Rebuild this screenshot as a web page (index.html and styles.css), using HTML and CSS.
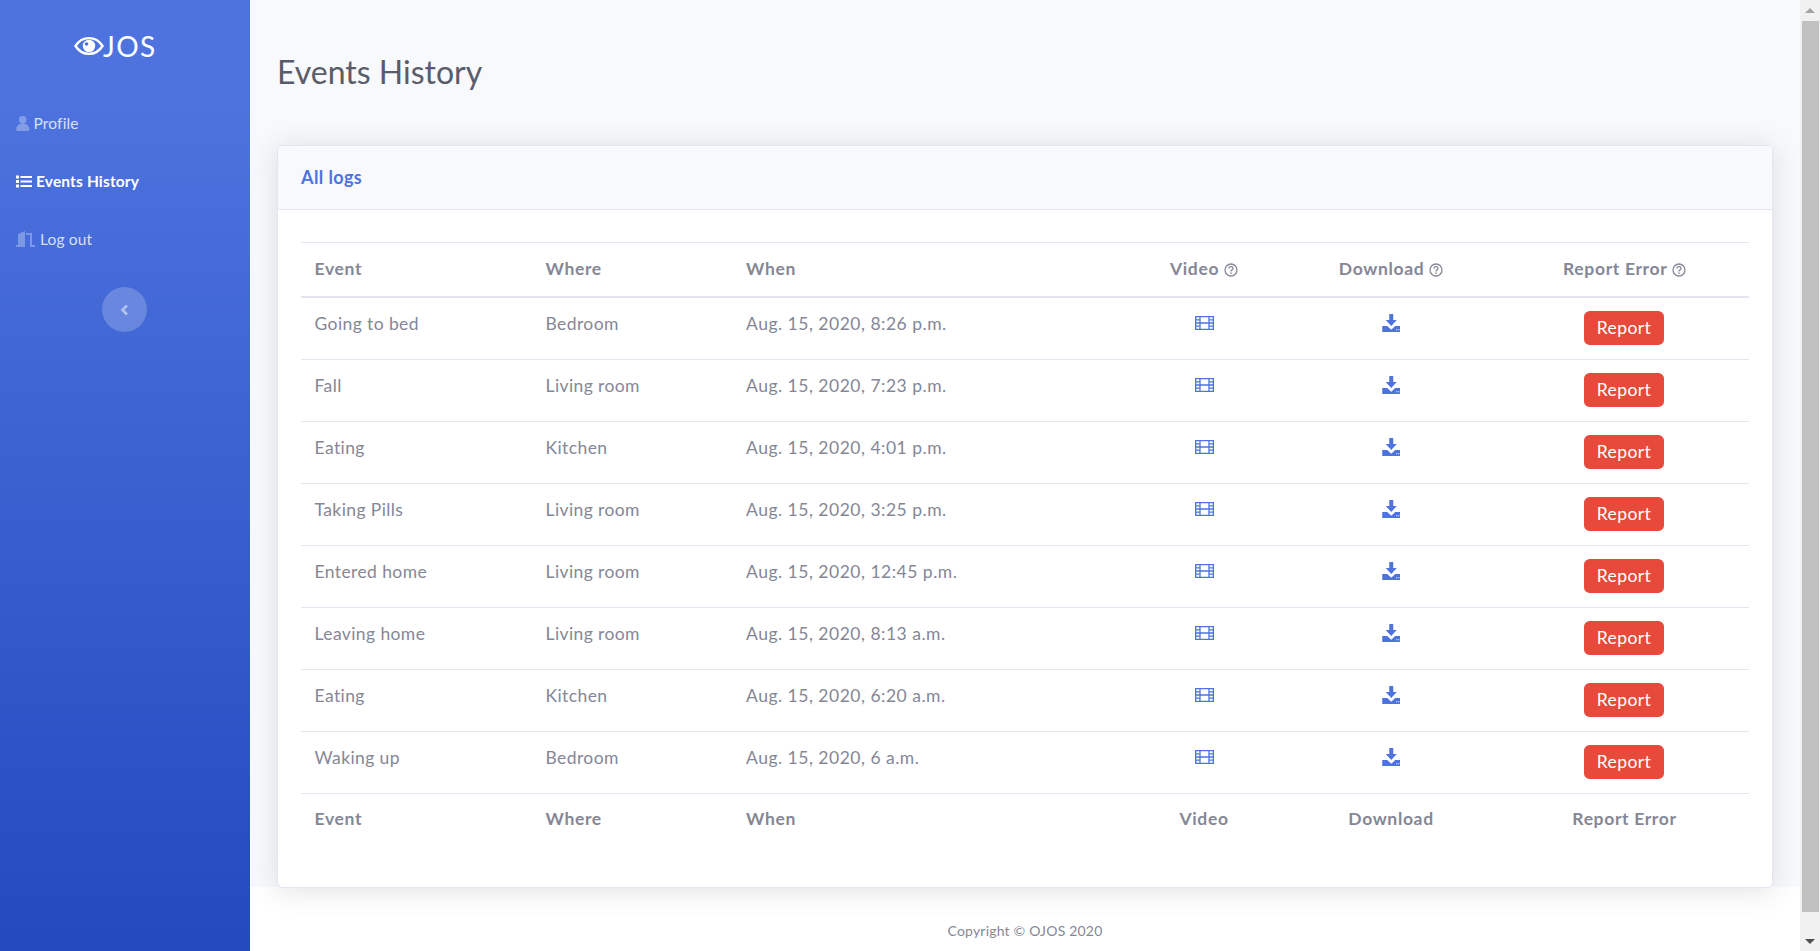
FILE: index.html
```html
<!DOCTYPE html>
<html lang="en">
<head>
<meta charset="utf-8">
<title>OJOS - Events History</title>
<link rel="stylesheet" href="styles.css">
</head>
<body>
<svg class="defs" width="0" height="0">
  <symbol id="film" viewBox="0 0 19 14"><path fill="none" stroke="currentColor" stroke-width="1.300" d="M.65.65h17.700v12.700H.65zM5 .65v12.700M14 .65v12.700M5 7h9M.65 3.800H5M.65 7H5M.65 10.200H5M14 3.800h4.350M14 7h4.350M14 10.200h4.350"/></symbol>
  <symbol id="dl" viewBox="0 0 18 18"><path fill="currentColor" d="M7 0h4v6h3.500L9 12 3.500 6H7zM0 12h5l4 3.800L13 12h5v6H0z"/><path fill="#fff" d="M14 15.200h1v1h-1zM16 15.200h1v1h-1z"/></symbol>
  <symbol id="q" viewBox="0 0 14 14"><circle cx="7" cy="7" r="6" fill="none" stroke="currentColor" stroke-width="1.300"/><path fill="none" stroke="currentColor" stroke-width="1.300" d="M5 5.500C5 3 9 3 9 5.400 9 7 7 6.800 7 8.500"/><path fill="currentColor" d="M6.300 9.500h1.400v1.400H6.300z"/></symbol>
</svg>
<div class="app">
  <aside class="sidebar">
    <div class="brand">
      <svg class="brand-eye" viewBox="0 0 30 20"><path fill="none" stroke="#fff" stroke-width="2.400" d="M1.500 10C8 -0.500 22 -0.500 28.500 10 22 20.500 8 20.500 1.500 10z"/><circle cx="15" cy="10" r="6.200" fill="#fff"/><circle cx="12.500" cy="8" r="1.800" fill="#4e73df"/></svg><span class="brand-text">JOS</span>
    </div>
    <a class="nav-item"><svg class="nav-icon user" viewBox="0 0 14 16"><circle cx="7" cy="4" r="4" fill="currentColor"/><path fill="currentColor" d="M0 14c0-8 14-8 14 0 0 1-.8 2-2 2H2c-1.200 0-2-1-2-2z"/></svg>Profile</a>
    <a class="nav-item active"><svg class="nav-icon list" viewBox="0 0 16 13"><path fill="#fff" d="M0 .5h3v3H0zM0 5h3v3H0zM0 9.500h3v3H0zM4.500 1h11.500v2H4.500zM4.500 5.500h11.500v2H4.500zM4.500 10h11.500v2H4.500z"/></svg>Events History</a>
    <a class="nav-item"><svg class="nav-icon door" viewBox="0 0 20 16"><path fill="currentColor" d="M0 14h2V3l7-3v16H0zM10 2h6v12h3v2h-5V4h-4z"/></svg>Log out</a>
    <button class="toggle"><svg viewBox="0 0 8 12" class="chev"><path fill="none" stroke="currentColor" stroke-width="2.600" d="M6.500 1.500 2 6l4.500 4.500"/></svg></button>
  </aside>
  <div class="main">
    <div class="content">
      <h1 class="title">Events History</h1>
      <section class="card">
        <header class="card-head">All logs</header>
        <div class="card-body">
          <table class="logs">
            <colgroup><col class="c1"><col class="c2"><col class="c3"><col class="c4"><col class="c5"><col class="c6"></colgroup>
            <thead>
              <tr><th>Event</th><th>Where</th><th>When</th><th class="ctr">Video <svg class="q"><use href="#q"/></svg></th><th class="ctr">Download <svg class="q"><use href="#q"/></svg></th><th class="ctr">Report Error <svg class="q"><use href="#q"/></svg></th></tr>
            </thead>
            <tbody>
              <tr><td>Going to bed</td><td>Bedroom</td><td class="when">Aug. 15, 2020, 8:26 p.m.</td><td class="ctr"><svg class="film"><use href="#film"/></svg></td><td class="ctr"><svg class="dl"><use href="#dl"/></svg></td><td class="ctr act"><button class="report">Report</button></td></tr>
              <tr><td>Fall</td><td>Living room</td><td class="when">Aug. 15, 2020, 7:23 p.m.</td><td class="ctr"><svg class="film"><use href="#film"/></svg></td><td class="ctr"><svg class="dl"><use href="#dl"/></svg></td><td class="ctr act"><button class="report">Report</button></td></tr>
              <tr><td>Eating</td><td>Kitchen</td><td class="when">Aug. 15, 2020, 4:01 p.m.</td><td class="ctr"><svg class="film"><use href="#film"/></svg></td><td class="ctr"><svg class="dl"><use href="#dl"/></svg></td><td class="ctr act"><button class="report">Report</button></td></tr>
              <tr><td>Taking Pills</td><td>Living room</td><td class="when">Aug. 15, 2020, 3:25 p.m.</td><td class="ctr"><svg class="film"><use href="#film"/></svg></td><td class="ctr"><svg class="dl"><use href="#dl"/></svg></td><td class="ctr act"><button class="report">Report</button></td></tr>
              <tr><td>Entered home</td><td>Living room</td><td class="when">Aug. 15, 2020, 12:45 p.m.</td><td class="ctr"><svg class="film"><use href="#film"/></svg></td><td class="ctr"><svg class="dl"><use href="#dl"/></svg></td><td class="ctr act"><button class="report">Report</button></td></tr>
              <tr><td>Leaving home</td><td>Living room</td><td class="when">Aug. 15, 2020, 8:13 a.m.</td><td class="ctr"><svg class="film"><use href="#film"/></svg></td><td class="ctr"><svg class="dl"><use href="#dl"/></svg></td><td class="ctr act"><button class="report">Report</button></td></tr>
              <tr><td>Eating</td><td>Kitchen</td><td class="when">Aug. 15, 2020, 6:20 a.m.</td><td class="ctr"><svg class="film"><use href="#film"/></svg></td><td class="ctr"><svg class="dl"><use href="#dl"/></svg></td><td class="ctr act"><button class="report">Report</button></td></tr>
              <tr><td>Waking up</td><td>Bedroom</td><td class="when">Aug. 15, 2020, 6 a.m.</td><td class="ctr"><svg class="film"><use href="#film"/></svg></td><td class="ctr"><svg class="dl"><use href="#dl"/></svg></td><td class="ctr act"><button class="report">Report</button></td></tr>
            </tbody>
            <tfoot>
              <tr><th>Event</th><th>Where</th><th>When</th><th class="ctr">Video</th><th class="ctr">Download</th><th class="ctr">Report Error</th></tr>
            </tfoot>
          </table>
        </div>
      </section>
    </div>
    <footer class="footer">Copyright © OJOS 2020</footer>
  </div>
  <div class="scrollbar">
    <div class="sb-btn"><span class="arrow up"></span></div>
    <div class="sb-track"><div class="sb-thumb"></div></div>
    <div class="sb-btn"><span class="arrow down"></span></div>
  </div>
</div>
</body>
</html>
```
FILE: styles.css
```css
* { box-sizing: border-box; }
html, body { margin: 0; height: 100%; overflow: hidden; }
body { font-family: Lato, "Open Sans", sans-serif; font-size: 17.500px; color: #858796; letter-spacing: .4px; }
.defs { position: absolute; }
.app { display: flex; height: 951px; }

.sidebar { width: 250px; flex: none; background: linear-gradient(180deg, #4e73df 10%, #224abe 100%); display: flex; flex-direction: column; }
.brand { height: 94px; padding: 0 0 2px 74px; display: flex; align-items: center; justify-content: flex-start; color: #fff; }
.brand-eye { width: 30px; height: 20px; flex: none; }
.brand-text { font-size: 28px; font-weight: 400; letter-spacing: 1.400px; line-height: 1; margin-left: -1px; }
.nav-item { height: 58px; display: flex; align-items: center; padding-left: 16px; font-size: 15.500px; color: rgba(255,255,255,.8); letter-spacing: .15px; }
.nav-item.active { color: #fff; font-weight: 700; }
.nav-icon { color: rgba(255,255,255,.3); margin-right: 4px; flex: none; }
.nav-icon.user { width: 13.500px; height: 15px; }
.nav-icon.list { width: 16px; height: 13px; margin-right: 4px; }
.nav-icon.door { width: 20px; height: 16px; margin-right: 4px; }
.toggle { width: 45px; height: 45px; border: 0; border-radius: 50%; background: rgba(255,255,255,.2); color: rgba(255,255,255,.5); align-self: center; margin: 19px 2px 0 0; padding: 0; display: flex; align-items: center; justify-content: center; }
.chev { width: 9px; height: 12px; }

.main { flex: 1; min-width: 0; display: flex; flex-direction: column; background: #fff; }
.content { background: #f8f9fc; height: 887px; padding: 0 27px; flex: none; }
.title { margin: 0; padding: 53px 0 0 0; height: 145px; font-size: 32px; line-height: 1.2; font-weight: 400; color: #5a5c69; letter-spacing: 0; }
.card { position: relative; height: 743px; background: #fff; border: 1px solid #e3e6f0; border-radius: 5.600px; box-shadow: 0 2.400px 28px 0 rgba(58,59,69,.15); overflow: hidden; }
.card-head { height: 64px; padding: 0 23px 2px; display: flex; align-items: center; background: #f8f9fc; border-bottom: 1px solid #e3e6f0; color: #4e73df; font-weight: 700; font-size: 18px; letter-spacing: .4px; }
.card-body { padding: 32px 23px 0; }

.logs { width: 1448px; table-layout: fixed; border-collapse: separate; border-spacing: 0; color: #858796; }
.c1 { width: 231px; } .c2 { width: 200px; } .c3 { width: 394px; } .c4 { width: 156px; } .c5 { width: 218px; } .c6 { width: 249px; }
.logs th, .logs td { padding: 0 13.500px; text-align: left; height: 62px; border-top: 1px solid #e3e6f0; }
.logs td { vertical-align: top; padding-top: 15px; }
.logs td.when { letter-spacing: .5px; padding-left: 14px; }
.logs th { font-weight: 700; letter-spacing: .65px; }
.logs th:nth-child(3) { padding-left: 14px; }
.logs thead th { height: 56px; border-bottom: 2px solid #e3e6f0; padding-bottom: 3px; }
.logs tbody tr:first-child td { border-top: 0; height: 61px; }
.logs .ctr { text-align: center; }
.logs tfoot th { height: 53px; padding-bottom: 3px; }
.q { width: 14px; height: 14px; vertical-align: -2px; }
.film { display: block; width: 19px; height: 14px; color: #4e73df; margin: 3px auto 0; }
.dl { display: block; width: 18.500px; height: 18px; color: #4e73df; margin: 1px auto 0; }
.logs td.act { padding: 13px 14px 0 13px; }
.report { display: block; margin: 0 auto; width: 80px; height: 34px; border: 0; background: #e74a3b; color: #fff; border-radius: 5.600px; font: 17.500px Lato, sans-serif; letter-spacing: .4px; padding: 0 0 1px; }

.footer { flex: 1; display: flex; align-items: center; justify-content: center; padding-top: 22px; font-size: 14px; color: #858796; letter-spacing: .2px; }

.scrollbar { width: 20px; flex: none; background: #f1f1f1; display: flex; flex-direction: column; }
.sb-btn { height: 20px; display: flex; align-items: center; justify-content: center; flex: none; }
.sb-track { flex: 1; padding: 1px 1px 0 2px; }
.sb-thumb { height: 891px; background: #c1c1c1; }
.arrow { width: 0; height: 0; border-left: 5px solid transparent; border-right: 5px solid transparent; }
.arrow.up { border-bottom: 5px solid #a3a3a3; }
.arrow.down { border-top: 5px solid #505050; }
```
